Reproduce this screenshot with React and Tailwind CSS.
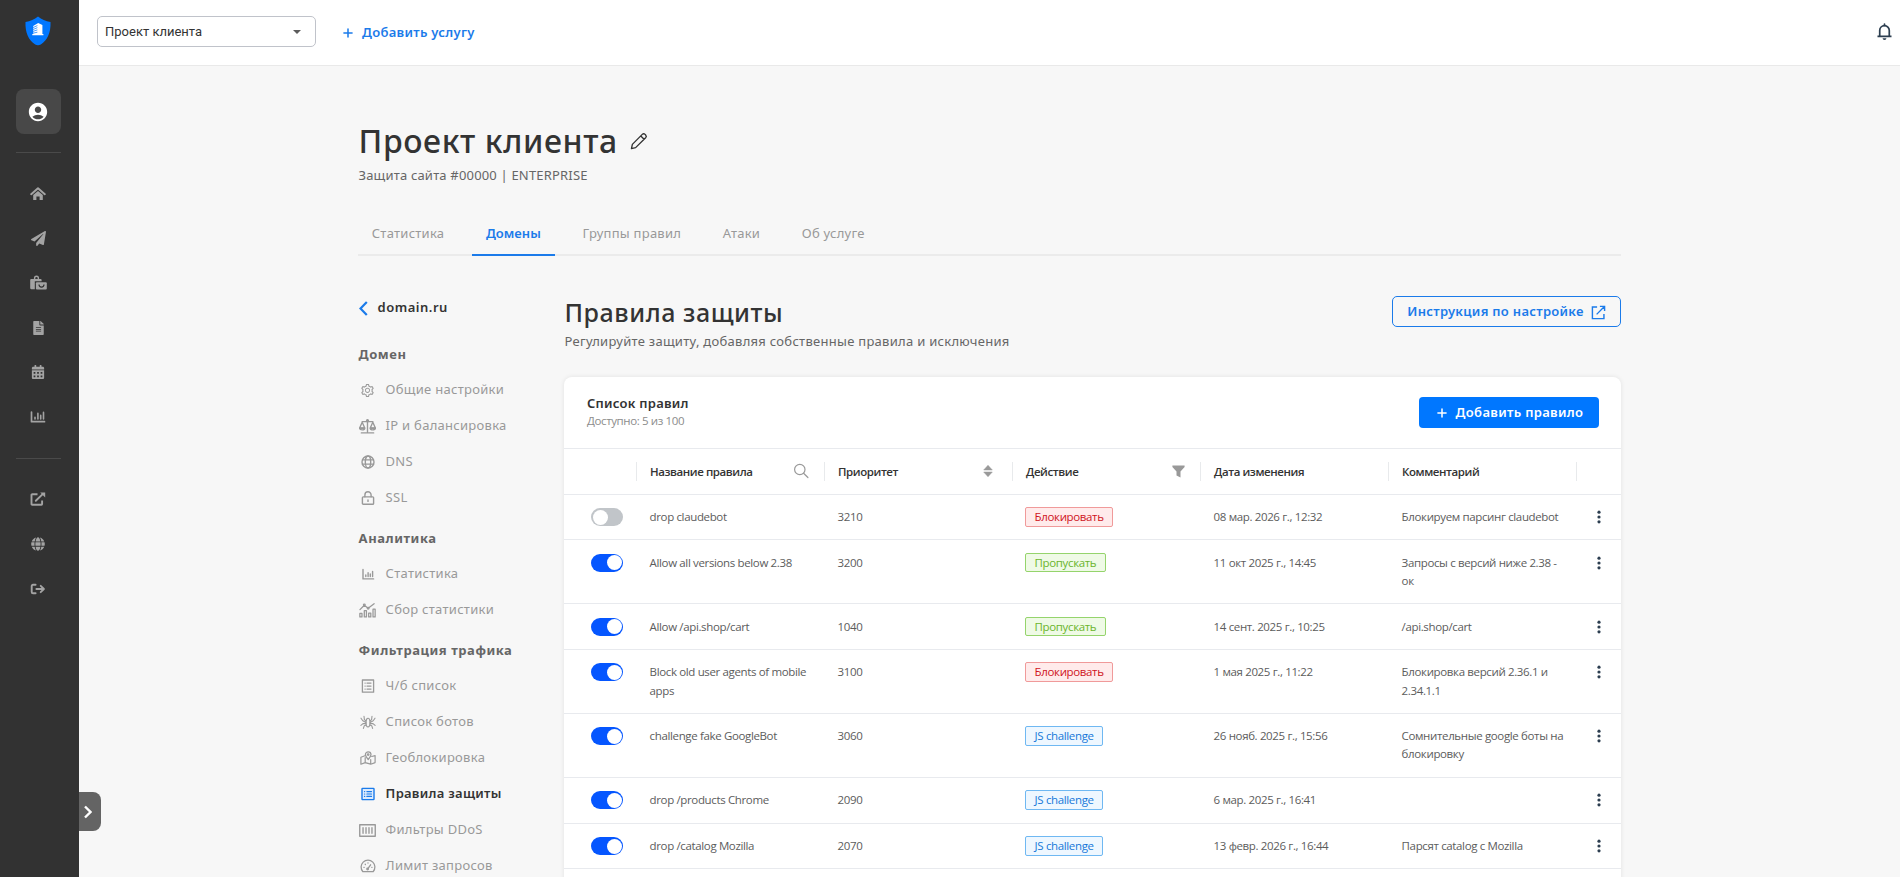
import React, { useState } from 'react';
import { FaPaperPlane, FaFileAlt, FaCalendarAlt, FaGlobe } from 'react-icons/fa';
import { AiOutlineSetting } from 'react-icons/ai';
import { MdAccountCircle } from 'react-icons/md';
import { Plus } from 'lucide-react';

const Svg = ({ children, className = 'w-4 h-4', sw = 1.2 }) => (
    <svg
        viewBox="0 0 16 16"
        className={className}
        fill="none"
        stroke="currentColor"
        strokeWidth={sw}
        strokeLinecap="round"
        strokeLinejoin="round"
    >
        {children}
    </svg>
);

const HomeIcon = () => (
    <Svg sw={2}>
        <path d="M1.2 8.2 8 2.3l6.8 5.9" />
        <path d="M3.2 9 8 4.9 12.8 9v5H9.6v-3.4H6.4V14H3.2z" fill="currentColor" stroke="none" />
    </Svg>
);

const BagsIcon = () => (
    <svg viewBox="0 0 17 16" className="w-[17px] h-4" fill="currentColor">
        <path
            d="M3.9 4V3.2a2.6 2.6 0 0 1 5.2 0V4h1.6a.9.9 0 0 1 .9.9v1.3H4.8v8.1H1.6a1.4 1.4 0 0 1-1.4-1.4v-8a.9.9 0 0 1 .9-.9zM5.3 4h2.4v-.8a1.2 1.2 0 0 0-2.4 0z"
            fillRule="evenodd"
        />
        <path d="M6.9 7.3h8.9a1 1 0 0 1 1 1v5.3a1 1 0 0 1-1 1H6.9a1 1 0 0 1-1-1V8.3a1 1 0 0 1 1-1z" />
        <path d="M9 9.6a2.5 2.5 0 0 0 5 0" fill="none" stroke="#323232" strokeWidth="1.2" />
    </svg>
);

const StatsIcon = () => (
    <Svg sw={1.7}>
        <path d="M1.5 3v9.7h13" />
        <path d="M5 10V8.2M7.9 10V4.4M10.7 10V6.4M13.5 10V3.4" strokeWidth="1.6" />
    </Svg>
);

const OutIcon = () => (
    <Svg sw={1.9}>
        <path d="M7.5 3.2H2.2a.7.7 0 0 0-.7.7v9.2a.7.7 0 0 0 .7.7h9.2a.7.7 0 0 0 .7-.7V9.6" strokeLinecap="butt" />
        <path d="M5.8 9.8 12.4 3.4" />
        <path d="M10.2 1.6h5v5z" fill="currentColor" stroke="none" />
    </Svg>
);

const LogoutIcon = () => (
    <Svg sw={1.9}>
        <path d="M5.6 3.7H3a1.3 1.3 0 0 0-1.3 1.3v6A1.3 1.3 0 0 0 3 12.3h2.6" />
        <path d="M6.4 8h7.4M10.7 4.8 13.9 8l-3.2 3.2" />
    </Svg>
);

const ScaleIcon = () => (
    <Svg className="w-[17px] h-[17px]" sw={1.3}>
        <path d="M8 2v11M3 3.4h10M2.2 14h11.6" />
        <path d="M.6 9.4 3 4l2.4 5.4zM10.6 9.4 13 4l2.4 5.4z" />
        <path d="M.6 9.6a2.4 1.6 0 0 0 4.8 0zM10.6 9.6a2.4 1.6 0 0 0 4.8 0z" />
        <circle cx="8" cy="2.6" r=".9" />
    </Svg>
);

const DnsIcon = () => (
    <Svg sw={1.4}>
        <circle cx="8" cy="8" r="6" />
        <ellipse cx="8" cy="8" rx="2.7" ry="6" />
        <path d="M2.4 5.9h11.2M2.4 10.1h11.2" />
    </Svg>
);

const LockIcon = () => (
    <Svg sw={1.4}>
        <rect x="2.4" y="6.9" width="11.2" height="7.4" rx=".9" />
        <path d="M4.9 6.7V4.9a3.1 3.1 0 0 1 6.2 0v1.8M8 9.9v1.5" />
    </Svg>
);

const SmallStatsIcon = () => (
    <Svg sw={1.4}>
        <path d="M3 3.5v9.4h10.6" />
        <path d="M5.8 10.6V9M8.1 10.6V6.8M10.3 10.6V7.9M12.6 10.6V5.4" />
    </Svg>
);

const CollectIcon = () => (
    <Svg className="w-[17px] h-[17px]" sw={1.2}>
        <path d="M.9 7.2 5 3l3.6 2.8L14.2 1.6" />
        <circle cx="5" cy="2.7" r=".8" />
        <circle cx="8.6" cy="5.8" r=".8" />
        <path d="M.8 14v-3.2h2V14zM5 14V8.2h2V14zM9.1 14v-3.6h2V14zM13.2 14V6.8h2V14z" />
    </Svg>
);

const ListIcon = () => (
    <Svg sw={1.3}>
        <rect x="2.4" y="2" width="11.2" height="12.2" />
        <path d="M7 5.1h4M7 8.1h4M7 11.1h4M5 5.1h.2M5 8.1h.2M5 11.1h.2" />
    </Svg>
);

const BugIcon = () => (
    <Svg sw={1.1}>
        <ellipse cx="8" cy="8.6" rx="2" ry="4.4" />
        <path d="M6 7 4.4 5.6 4 2.2M6 8.6 2.8 6.8 1 4.2M6 9.6H3L.9 11.4M6.3 11l-2 .7-.9 2.7" />
        <path d="M10 7l1.6-1.4.4-3.4M10 8.6l3.2-1.8L15 4.2M10 9.6h3l2.1 1.8M9.7 11l2 .7.9 2.700" />
    </Svg>
);

const MapIcon = () => (
    <Svg sw={1.2}>
        <path d="M4.9 5.8.9 7.2v7l4.3-1.6 5.5 1.6 4.4-1.6v-7l-3.4.9M5.2 12.4V7.6M10.7 14V9.6" />
        <path d="M8.2 9.6C6.2 7.2 5.4 6 5.4 4.6a2.8 2.8 0 0 1 5.6 0c0 1.4-.8 2.6-2.8 5z" />
        <circle cx="8.2" cy="4.6" r=".8" />
    </Svg>
);

const RulesIcon = () => (
    <Svg sw={1.4}>
        <rect x="2" y="2.4" width="12" height="11.2" rx=".6" fill="#dcebfd" />
        <path d="M6.9 5.6h4.6M6.9 8h4.6M6.9 10.4h4.6M4.5 5.6h.2M4.5 8h.2M4.5 10.4h.2" strokeWidth="1.2" />
    </Svg>
);

const DdosIcon = () => (
    <Svg className="w-[17px] h-[17px]" sw={1.3}>
        <rect x=".7" y="2.6" width="14.6" height="10.8" />
        <path d="M3.8 5.4v5.2M6.6 5.4v5.2M9.4 5.4v5.2M12.2 5.4v5.2" />
    </Svg>
);

const GaugeIcon = () => (
    <Svg sw={1.3}>
        <path d="M2.9 13.7a6.9 6.9 0 1 1 10.2 0z" />
        <path d="M7.7 10.9 10.6 6.8M3.9 9.3h.3M5.2 6.3l.2.2M8 5v-.2M12 9.3h-.2" />
        <circle cx="7.6" cy="11" r=".8" />
    </Svg>
);

const PencilIcon = () => (
    <Svg className="w-[18px] h-[18px] text-[#333]" sw={1.2}>
        <path d="M1.3 14.7 2.1 11l8.800-8.900a1.800 1.800 0 0 1 2.500 0l.5.5a1.800 1.800 0 0 1 0 2.500L5 13.900zM9.600 3.500l2.900 2.900" />
    </Svg>
);

const BellIcon = () => (
    <Svg className="w-[17px] h-[17px] text-[#2c3e50]" sw={1.6}>
        <path d="M1.4 12.5h13.200M3.500 12.500V7a4.500 4.500 0 0 1 9 0v5.500" strokeLinecap="butt" />
        <path d="M8 1v1.3" />
        <path d="M6.2 14.300h3.600a1.800 1.600 0 0 1-3.600 0z" fill="currentColor" stroke="none" />
    </Svg>
);

const Logo = () => (
    <svg viewBox="0 0 26 30" className="w-[26px] h-[30px]">
        <path d="M13 .6c3.6 3 7.6 4.7 12.5 5.4.5 10.6-3.3 18.4-9.7 22.6-1.800 1-3.800 1-5.600 0C3.800 24.400 0 16.600.5 6 5.400 5.300 9.400 3.600 13 .6z" fill="#0077ff" />
        <path d="M13.2 6.9 17.400 9v9.100h1v1.100H7.300v-1.100h.9V10z" fill="#fff" />
        <path d="m8 11.6 4.400-2M8 13.500l4.400-1.800M8 15.400l4.400-1.500M8 17.200l4.400-1" stroke="#0077ff" strokeWidth=".7" />
    </svg>
);

const menuTop = [
    <HomeIcon />,
    <FaPaperPlane className="w-[15px] h-[15px]" />,
    <BagsIcon />,
    <FaFileAlt className="w-[13px] h-[14px]" />,
    <FaCalendarAlt className="w-[14px] h-[14px]" />,
    <StatsIcon />,
];

const menuBottom = [<OutIcon />, <FaGlobe className="w-[14px] h-[14px]" />, <LogoutIcon />];

const tabs = ['Статистика', 'Домены', 'Группы правил', 'Атаки', 'Об услуге'];

const sections = [
    {
        title: 'Домен',
        items: [
            { name: 'Общие настройки', icon: <AiOutlineSetting className="w-[15px] h-[15px]" /> },
            { name: 'IP и балансировка', icon: <ScaleIcon /> },
            { name: 'DNS', icon: <DnsIcon /> },
            { name: 'SSL', icon: <LockIcon /> },
        ],
    },
    {
        title: 'Аналитика',
        items: [
            { name: 'Статистика', icon: <SmallStatsIcon /> },
            { name: 'Сбор статистики', icon: <CollectIcon /> },
        ],
    },
    {
        title: 'Фильтрация трафика',
        items: [
            { name: 'Ч/б список', icon: <ListIcon /> },
            { name: 'Список ботов', icon: <BugIcon /> },
            { name: 'Геоблокировка', icon: <MapIcon /> },
            { name: 'Правила защиты', icon: <RulesIcon />, active: true },
            { name: 'Фильтры DDoS', icon: <DdosIcon /> },
            { name: 'Лимит запросов', icon: <GaugeIcon /> },
        ],
    },
];

const actions = {
    block: { label: 'Блокировать', style: 'text-[#cf1322] bg-[#ffebeb] border-[#f09a9a]' },
    pass: { label: 'Пропускать', style: 'text-[#6bb52b] bg-[#effae6] border-[#95d46c]' },
    js: { label: 'JS challenge', style: 'text-[#1677d9] bg-[#eef7ff] border-[#6fb8f2]' },
};

const initialRules = [
    { id: 1, on: false, name: 'drop claudebot', priority: 3210, action: 'block', date: '08 мар. 2026 г., 12:32', comment: 'Блокируем парсинг claudebot' },
    { id: 2, on: true, name: 'Allow all versions below 2.38', priority: 3200, action: 'pass', date: '11 окт 2025 г., 14:45', comment: 'Запросы с версий ниже 2.38 - ок' },
    { id: 3, on: true, name: 'Allow /api.shop/cart', priority: 1040, action: 'pass', date: '14 сент. 2025 г., 10:25', comment: '/api.shop/cart' },
    { id: 4, on: true, name: 'Block old user agents of mobile apps', priority: 3100, action: 'block', date: '1 мая 2025 г., 11:22', comment: 'Блокировка версий 2.36.1 и 2.34.1.1' },
    { id: 5, on: true, name: 'challenge fake GoogleBot', priority: 3060, action: 'js', date: '26 нояб. 2025 г., 15:56', comment: 'Сомнительные google боты на блокировку' },
    { id: 6, on: true, name: 'drop /products Chrome', priority: 2090, action: 'js', date: '6 мар. 2025 г., 16:41', comment: '' },
    { id: 7, on: true, name: 'drop /catalog Mozilla', priority: 2070, action: 'js', date: '13 февр. 2026 г., 16:44', comment: 'Парсят catalog с Mozilla' },
];

const grid = 'grid grid-cols-[72px_188px_188px_188px_188px_188px_45px]';

const HeadCell = ({ children, icon }) => (
    <div className="flex items-center h-[19px] border-l border-[#e8eaec] pl-[13px] pr-[15px]">
        <span className="flex-1 pt-px">{children}</span>
        {icon}
    </div>
);

const Toggle = ({ on, onClick }) => (
    <button
        type="button"
        onClick={onClick}
        className={`flex w-8 h-[18px] rounded-full p-[1.5px] ${on ? 'justify-end bg-[#0556ff]' : 'justify-start bg-[#c1c5c9]'}`}
    >
        <span className="w-[15px] h-[15px] rounded-full bg-white" />
    </button>
);

const Sidebar = () => (
    <aside className="w-[79px] shrink-0 pr-[2px] bg-[#323232] text-[#a3a3a3] flex flex-col items-center">
        <div className="pt-4 pr-[2px]"><Logo /></div>
        <div className="mt-[43px] w-[45px] h-[45px] rounded-lg bg-[#484848] flex items-center justify-center text-white">
            <MdAccountCircle className="w-[22px] h-[22px] mr-px" />
        </div>
        <div className="mt-[18px] w-[45px] h-px bg-[#4a4a4a]" />
        <nav className="mt-[19px] pr-px flex flex-col items-center">
            {menuTop.map((icon, i) => (
                <a key={i} className="h-[44.5px] flex items-center">{icon}</a>
            ))}
        </nav>
        <div className="mt-[19px] w-[45px] h-px bg-[#4a4a4a]" />
        <nav className="mt-[18px] pr-px flex flex-col items-center">
            {menuBottom.map((icon, i) => (
                <a key={i} className="h-[44.8px] flex items-center">{icon}</a>
            ))}
        </nav>
    </aside>
);

const Header = () => (
    <header className="h-[66px] shrink-0 bg-white border-b border-[#e9e9e9] flex items-start pt-4 pl-[18px] pr-[7px]">
        <div className="w-[219px] h-[31px] border border-[#c0c3ca] rounded-[5px] flex items-center justify-between pl-[7px] pr-[14px] font-[Roboto,sans-serif] text-[13px] text-[#333]">
            <span>Проект клиента</span>
            <svg viewBox="0 0 8 4" className="w-2 h-1"><path d="M0 0h8L4 4z" fill="#5c5c5c" /></svg>
        </div>
        <button type="button" className="ml-[25px] h-[33px] flex items-center gap-[7px] text-[#1b7bea] font-semibold text-[13px] tracking-[0.3px]">
            <Plus className="w-[14px] h-[14px]" strokeWidth={2.6} />
            Добавить услугу
        </button>
        <div className="ml-auto mt-[7px]"><BellIcon /></div>
    </header>
);

const SideMenu = () => (
    <div className="w-[206px] shrink-0 pl-[0.6px] text-[13px] tracking-[0.28px]">
        <div className="flex items-center h-5 mt-[42px] text-[#333] font-semibold tracking-[0.5px]">
            <svg viewBox="0 0 9 15" className="w-[9px] h-[15px] mr-[10px]" fill="none" stroke="#1b7bea" strokeWidth="2.2">
                <path d="M7.8 1 1.5 7.5 7.8 14" />
            </svg>
            domain.ru
        </div>
        {sections.map((s, i) => (
            <div key={s.title} className={i === 0 ? 'mt-[26px]' : 'mt-3'}>
                <div className="h-5 leading-5 mb-2 font-bold text-[#666] tracking-[0.55px]">{s.title}</div>
                {s.items.map((it) => (
                    <a key={it.name} className={`h-9 flex items-center ${it.active ? 'text-[#333] font-semibold' : 'text-[#999]'}`}>
                        <span className={`w-[18px] mr-[9px] flex justify-center ${it.active ? 'text-[#1b7bea]' : ''}`}>{it.icon}</span>
                        {it.name}
                    </a>
                ))}
            </div>
        ))}
    </div>
);

const RulesTable = () => {
    const [rules, setRules] = useState(initialRules);

    const toggle = (id) => setRules(rules.map((r) => (r.id === id ? { ...r, on: !r.on } : r)));

    return (
        <div className="mt-[26px] h-[600px] bg-white rounded-t-lg shadow-[0_0_5px_rgba(0,0,0,0.09)]">
            <div className="h-[71px] flex items-start justify-between pl-[23px] pr-[22px]">
                <div className="pt-[17px]">
                    <div className="text-[13px] leading-[18px] font-semibold text-[#333] tracking-[0.25px]">Список правил</div>
                    <div className="text-[11.5px] leading-[17px] text-[#8c8c8c] font-['Open_Sans',sans-serif] tracking-[-0.38px]">Доступно: 5 из 100</div>
                </div>
                <button type="button" className="mt-5 w-[180px] h-[31px] rounded bg-[#0077ff] text-white text-[13px] font-semibold tracking-[0.33px] flex items-center justify-center gap-[7px]">
                    <Plus className="w-[14px] h-[14px]" strokeWidth={2.6} />
                    Добавить правило
                </button>
            </div>
            <div className="font-['Open_Sans',sans-serif] text-[11.5px] leading-[18.1px] tracking-[-0.36px] text-[#5c5c5c]">
                <div className={`${grid} h-[46.7px] items-center border-y border-[#e8eaee] text-[#333] font-semibold tracking-[-0.42px]`}>
                    <div />
                    <HeadCell
                        icon={
                            <Svg className="w-4 h-4 text-[#999]" sw={1.2}>
                                <circle cx="6.8" cy="6.5" r="5.2" />
                                <path d="m10.6 10.3 4.3 4.2" />
                            </Svg>
                        }
                    >
                        Название правила
                    </HeadCell>
                    <HeadCell
                        icon={
                            <svg viewBox="0 0 10 12" className="w-[10px] h-3 mr-1" fill="#999">
                                <path d="M5 .3 9.3 5H.7zM5 11.7.7 7h8.6z" stroke="#999" strokeWidth=".5" strokeLinejoin="round" />
                            </svg>
                        }
                    >
                        Приоритет
                    </HeadCell>
                    <HeadCell
                        icon={
                            <svg viewBox="0 0 13 13" className="w-[13px] h-[13px]" fill="#999">
                                <path d="M.4.5h12.2v1.4L8.5 6.5v6l-4-2v-4L.4 1.9z" />
                            </svg>
                        }
                    >
                        Действие
                    </HeadCell>
                    <HeadCell>Дата изменения</HeadCell>
                    <HeadCell>Комментарий</HeadCell>
                    <HeadCell />
                </div>
                {rules.map((r) => (
                    <div key={r.id} className={`${grid} py-[13.35px] border-b border-[#e8eaee]`}>
                        <div className="pl-[27px]">
                            <Toggle on={r.on} onClick={() => toggle(r.id)} />
                        </div>
                        <div className="pl-[13.6px] pr-3">{r.name}</div>
                        <div className="pl-[13.6px] pr-3">{r.priority}</div>
                        <div className="px-[13px]">
                            <span className={`inline-block -my-px h-[19.5px] leading-[17.5px] border rounded-[2px] px-[8.6px] align-top ${actions[r.action].style}`}>
                                {actions[r.action].label}
                            </span>
                        </div>
                        <div className="pl-[13.6px] pr-3">{r.date}</div>
                        <div className="pl-[13.6px] pr-3">{r.comment}</div>
                        <div className="flex justify-center h-[18px] items-center">
                            <svg viewBox="0 0 4 14" className="w-1 h-[14px]" fill="#2c3e50">
                                <circle cx="2" cy="2.2" r="1.6" />
                                <circle cx="2" cy="7" r="1.6" />
                                <circle cx="2" cy="11.8" r="1.6" />
                            </svg>
                        </div>
                    </div>
                ))}
            </div>
        </div>
    );
};

const App = () => {
    const [tab, setTab] = useState('Домены');

    return (
        <div className="h-screen w-full flex overflow-hidden bg-[#f7f7f7] font-['Noto_Sans',sans-serif]">
            <Sidebar />
            <div className="relative flex-1 flex flex-col min-w-0">
                <Header />
                <button type="button" className="absolute left-0 top-[792px] w-[22px] h-[39px] rounded-r-lg bg-[#646464] flex items-center justify-center">
                    <svg viewBox="0 0 8 14" className="w-2 h-[14px] mr-1" fill="none" stroke="#fff" strokeWidth="2.4">
                        <path d="m1 1.500 5.500 5.500L1 12.500" />
                    </svg>
                </button>
                <main className="w-[1263px] ml-[279px] mt-[54px] flex-1 min-h-0">
                    <div className="flex items-center gap-3 h-[42px] pl-[0.6px]">
                        <h1 className="text-[32px] leading-[42px] font-medium text-[#333] tracking-[0.6px]">Проект клиента</h1>
                        <PencilIcon />
                    </div>
                    <div className="mt-[3px] pl-[0.5px] text-[13px] leading-5 text-[#666] tracking-[0.18px]">Защита сайта #00000 | ENTERPRISE</div>
                    <div className="mt-[25px] h-[46px] flex gap-[14px] border-b-2 border-[#ebebeb]">
                        {tabs.map((t) => (
                            <button
                                key={t}
                                type="button"
                                onClick={() => setTab(t)}
                                className={`-mb-[2px] px-[13.8px] pt-[3px] text-[13px] border-b-2 ${
                                    t === tab ? 'text-[#1b7bea] border-[#1b7bea] font-semibold tracking-[0.05px]' : 'text-[#999] border-transparent tracking-[0.25px]'
                                }`}
                            >
                                {t}
                            </button>
                        ))}
                    </div>
                    <div className="flex">
                        <SideMenu />
                        <div className="flex-1 pt-10">
                            <div className="flex justify-between items-start">
                                <div className="pl-[0.5px]">
                                    <h2 className="h-[33px] leading-8 text-[25px] font-medium text-[#333] tracking-[0.55px]">Правила защиты</h2>
                                    <p className="mt-[2px] h-5 leading-5 text-[13px] text-[#666] tracking-[0.28px]">Регулируйте защиту, добавляя собственные правила и исключения</p>
                                </div>
                                <button type="button" className="w-[229px] h-[31px] border border-[#1b7bea] rounded-[5px] text-[#1b7bea] text-[13px] font-semibold tracking-[0.3px] flex items-center justify-center gap-[7px] pt-px">
                                    Инструкция по настройке
                                    <Svg className="w-[15px] h-[15px]" sw={1.5}>
                                        <path d="M6.5 2.2h-5v12.3h12.3v-5M9.5 1.5h5v5M14.3 1.7 6 10" strokeLinecap="butt" strokeLinejoin="miter" />
                                    </Svg>
                                </button>
                            </div>
                            <RulesTable />
                        </div>
                    </div>
                </main>
            </div>
        </div>
    );
};

export default App;
